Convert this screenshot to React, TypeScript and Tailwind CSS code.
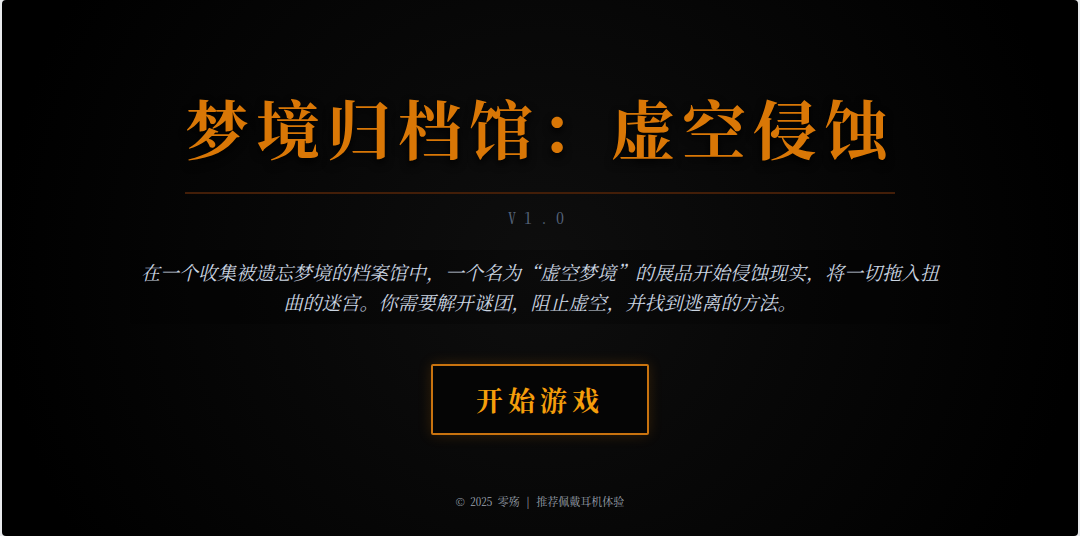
const serif =
  "font-['Noto_Serif_CJK_SC','Noto_Serif_SC','Source_Han_Serif_SC','Songti_SC',SimSun,'Noto_Sans_CJK_SC',serif]";
const halfWidth = "[font-feature-settings:'hwid']";

export default function App() {
  return (
    <div className="min-h-screen bg-[#e8eaec] px-0.5">
      <main
        className={`flex min-h-screen flex-col items-center rounded-sm bg-[radial-gradient(circle_at_center,#0e0e0e_0%,#000000_90%)] px-4 pt-[78px] text-center ${serif}`}
      >
        <h1 className="border-b-2 border-[#431e08] pb-[18px] text-[64px] leading-[96px] font-bold tracking-[7px] text-[#d97706] [text-shadow:0_4px_8px_#000]">
          梦境归档馆：虚空侵蚀
        </h1>
        <p className={`mt-3 text-base leading-6 tracking-[8px] text-[#56657c] ${halfWidth}`}>V1.0</p>
        <p className="mt-5 w-full max-w-[820px] rounded-sm bg-black/20 px-2 py-[7px] text-[19px] leading-[30px] text-[#cbd5e1] italic">
          在一个收集被遗忘梦境的档案馆中，一个名为“虚空梦境”的展品开始侵蚀现实，将一切拖入扭曲的迷宫。你需要解开谜团，阻止虚空，并找到逃离的方法。
        </p>
        <button
          type="button"
          className="mt-10 rounded-xs border-2 border-[#c9730f] bg-[#050505] px-[43px] py-4 text-[27px] leading-[35px] font-bold tracking-[5px] text-[#f59e0b] shadow-[0_0_14px_rgba(217,119,6,0.2)]"
        >
          开始游戏
        </button>
        <footer className={`mt-auto pb-[25px] text-[11px] leading-5 text-[#9ca3af] ${halfWidth}`}>
          © 2025 零殇 | 推荐佩戴耳机体验
        </footer>
      </main>
    </div>
  );
}
